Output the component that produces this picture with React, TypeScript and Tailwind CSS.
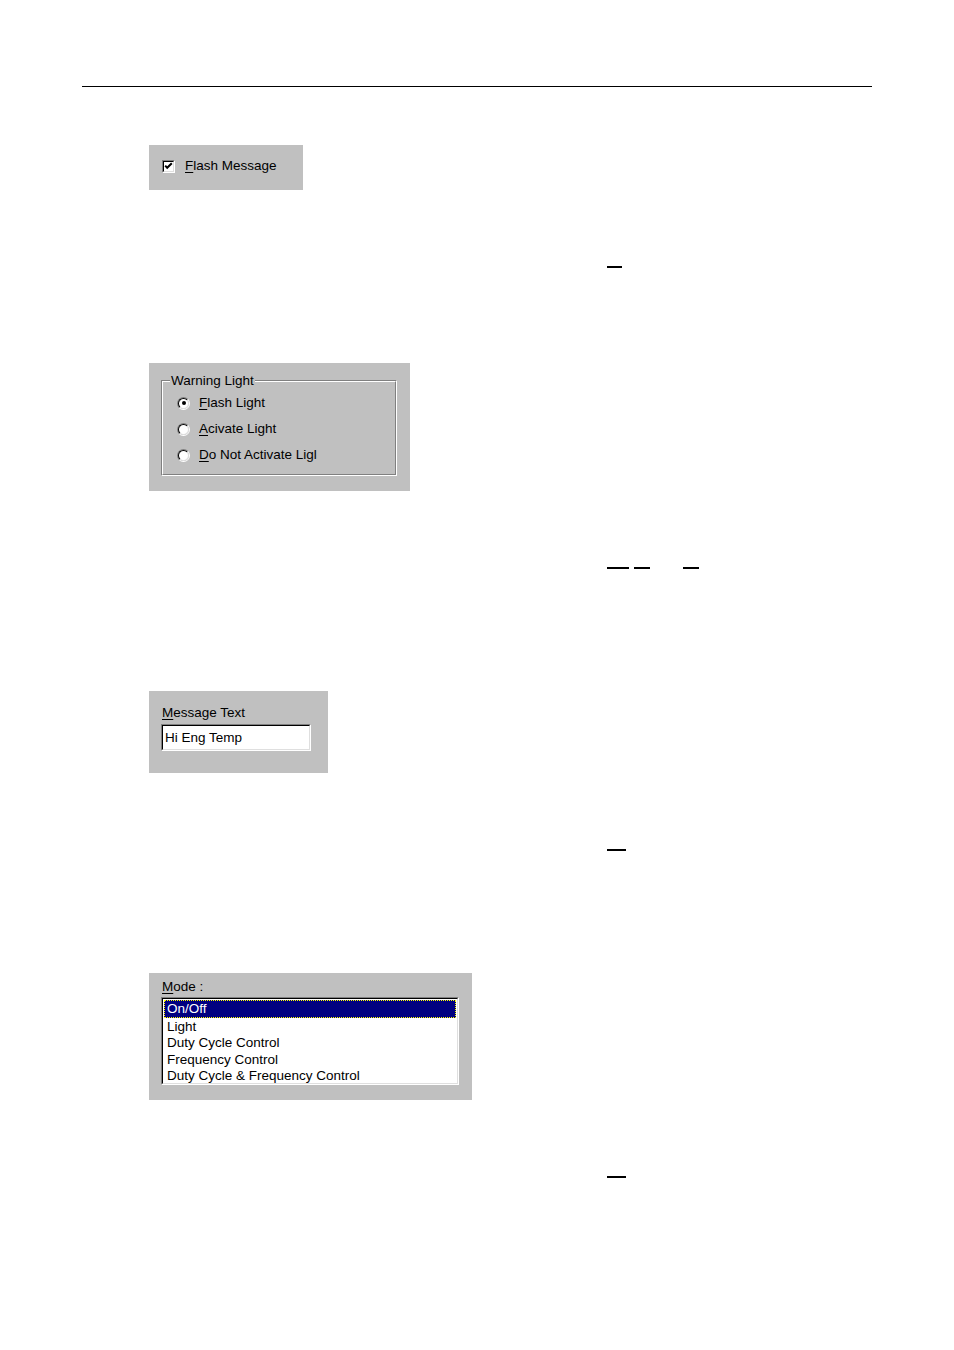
import React from "react";

const font = { fontFamily: '"Liberation Sans", Arial, sans-serif' };

function U({ c }: { c: string }) {
  return <span className="underline underline-offset-[2px] decoration-[1px]">{c}</span>;
}

function Dash({ w, ml = 0 }: { w: number; ml?: number }) {
  return <div className="h-[2px] bg-black" style={{ width: w, marginLeft: ml }} />;
}

function Radio({ checked }: { checked?: boolean }) {
  return (
    <div className="w-[13px] h-[13px] shrink-0 rounded-full border border-t-[#808080] border-l-[#808080] border-r-white border-b-white">
      <div className="w-full h-full rounded-full border border-t-black border-l-black border-r-[#dfdfdf] border-b-[#dfdfdf] bg-white flex items-center justify-center">
        {checked && <div className="w-[4px] h-[4px] rounded-full bg-black" />}
      </div>
    </div>
  );
}

function Sunken({ children, className = "" }: { children: React.ReactNode; className?: string }) {
  return (
    <div className={"border border-t-[#808080] border-l-[#808080] border-r-white border-b-white " + className}>
      <div className="w-full h-full border border-t-black border-l-black border-r-[#dfdfdf] border-b-[#dfdfdf] bg-white">
        {children}
      </div>
    </div>
  );
}

export default function App() {
  return (
    <div className="w-[954px] h-[1350px] bg-white text-black text-[13.5px] leading-[16px] flex flex-col" style={font}>
      <div className="mt-[86px] ml-[82px] w-[790px] h-px bg-black" />

      {/* Panel 1 */}
      <div className="mt-[58px] ml-[149px] w-[154px] h-[45px] bg-[#c0c0c0] pl-[13px] pt-[13px]">
        <div className="flex items-center gap-[10px]">
          <Sunken className="w-[13px] h-[13px]">
            <svg width="9" height="9" viewBox="0 0 9 9" className="block">
              <path d="M1.2 3.6 L3.2 5.8 L7.8 1.2" fill="none" stroke="#000" strokeWidth="2" />
            </svg>
          </Sunken>
          <span><U c="F" />lash Message</span>
        </div>
      </div>

      <div className="mt-[76px] ml-[607px]">
        <Dash w={15} />
      </div>

      {/* Panel 2 */}
      <div className="mt-[95px] ml-[149px] w-[261px] h-[128px] bg-[#c0c0c0] pl-[12px] pt-[17px]">
        <div className="relative w-[236px] h-[96px] border border-t-[#808080] border-l-[#808080] border-r-white border-b-white">
          <div className="w-full h-full border border-t-white border-l-white border-r-[#808080] border-b-[#808080] pl-[14px] pt-[13px] flex flex-col gap-[10px]">
            <div className="flex items-center gap-[9px] h-[16px]">
              <Radio checked />
              <span><U c="F" />lash Light</span>
            </div>
            <div className="flex items-center gap-[9px] h-[16px]">
              <Radio />
              <span><U c="A" />civate Light</span>
            </div>
            <div className="flex items-center gap-[9px] h-[16px]">
              <Radio />
              <span><U c="D" />o Not Activate Ligl</span>
            </div>
          </div>
          <span className="absolute left-[8px] top-[-8px] bg-[#c0c0c0] px-px">Warning Light</span>
        </div>
      </div>

      <div className="mt-[76px] ml-[607px] flex">
        <Dash w={22} />
        <Dash w={16} ml={5} />
        <Dash w={16} ml={33} />
      </div>

      {/* Panel 3 */}
      <div className="mt-[122px] ml-[149px] w-[179px] h-[82px] bg-[#c0c0c0] pl-[12px] pt-[14px] flex flex-col">
        <span className="ml-px"><U c="M" />essage Text</span>
        <Sunken className="mt-[3px] w-[150px] h-[27px]">
          <div className="pl-[2px] pt-[4px]">Hi Eng Temp</div>
        </Sunken>
      </div>

      <div className="mt-[76px] ml-[607px]">
        <Dash w={19} />
      </div>

      {/* Panel 4 */}
      <div className="mt-[122px] ml-[149px] w-[323px] h-[127px] bg-[#c0c0c0] pl-[12px] pt-[6px] flex flex-col">
        <span className="ml-px"><U c="M" />ode :</span>
        <Sunken className="mt-[2px] w-[298px] h-[88px]">
          <div className="flex flex-col leading-[16.6px] pt-px">
            <div className="mx-px bg-[#000080] text-white pl-[3px] pt-px outline outline-1 outline-dotted outline-[#ffff00] -outline-offset-1">On/Off</div>
            <div className="pl-[4px] pt-px">Light</div>
            <div className="pl-[4px]">Duty Cycle Control</div>
            <div className="pl-[4px]">Frequency Control</div>
            <div className="pl-[4px]">Duty Cycle &amp; Frequency Control</div>
          </div>
        </Sunken>
      </div>

      <div className="mt-[76px] ml-[607px]">
        <Dash w={19} />
      </div>
    </div>
  );
}
